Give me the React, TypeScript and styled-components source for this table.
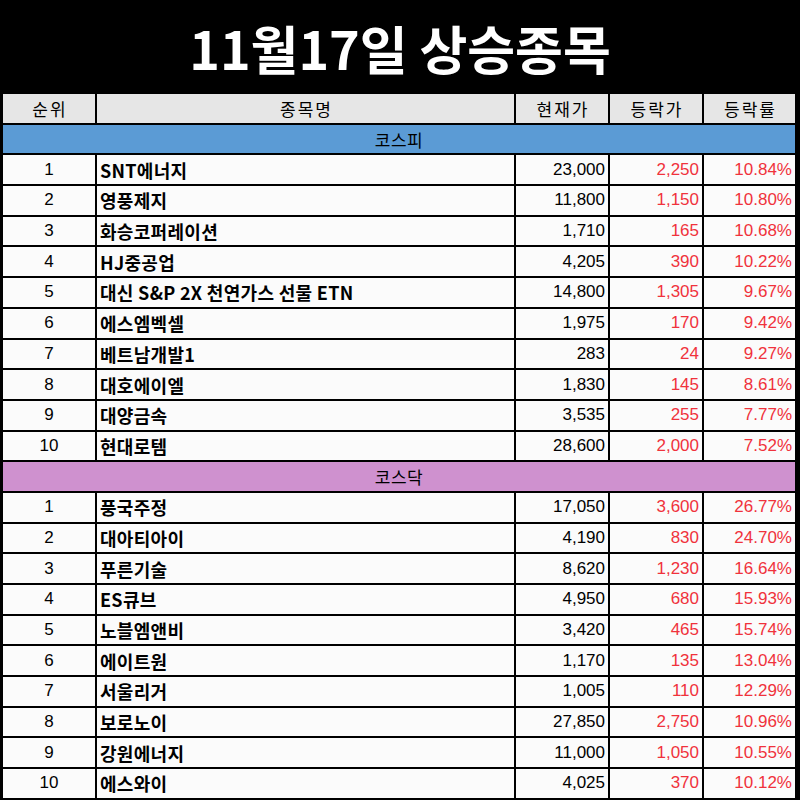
import React from 'react';
import styled, { createGlobalStyle } from 'styled-components';

const GlobalStyle = createGlobalStyle`
  html, body {
    margin: 0;
    padding: 0;
    background: #000;
  }
`;

const Page = styled.div`
  width: 800px;
  height: 800px;
  background: #000;
  overflow: hidden;
`;

const Title = styled.h1`
  margin: 0;
  height: 94px;
  display: flex;
  align-items: center;
  justify-content: center;
  color: #fff;
  font-family: "Noto Sans CJK KR", sans-serif;
  font-weight: 700;
  font-size: 52px;
`;

const Table = styled.div`
  display: grid;
  grid-template-columns: 92px 417px 92px 92px 91px;
  grid-auto-rows: 28.7px;
  gap: 2px;
  padding: 0 5px 3px 3px;
`;

const Cell = styled.div<{ $align?: 'left' | 'center' | 'right'; $red?: boolean }>`
  display: flex;
  align-items: center;
  justify-content: ${p => (p.$align === 'left' ? 'flex-start' : p.$align === 'right' ? 'flex-end' : 'center')};
  padding: 0 3px;
  background: #fbfbfb;
  color: ${p => (p.$red ? '#f0323c' : '#000')};
  font-family: "Liberation Sans", "Noto Sans CJK KR", sans-serif;
  font-size: 17px;
  white-space: nowrap;
  overflow: hidden;
`;

const HeadCell = styled(Cell)`
  background: #e6e6e6;
  font-family: "Noto Sans CJK KR", sans-serif;
  font-size: 17px;
  letter-spacing: 2px;
  padding-left: 5px;
`;

const NameCell = styled(Cell)`
  font-family: "Noto Sans CJK KR", sans-serif;
  font-weight: 700;
  font-size: 18px;
  letter-spacing: 0.3px;
`;

const Section = styled.div<{ $color: string }>`
  grid-column: 1 / -1;
  display: flex;
  align-items: center;
  justify-content: center;
  background: ${p => p.$color};
  font-family: "Noto Sans CJK KR", sans-serif;
  font-size: 17px;
  letter-spacing: 0.5px;
  color: #000;
`;

type Row = [string, string, string, string];

const kospi: Row[] = [
  ['SNT에너지', '23,000', '2,250', '10.84%'],
  ['영풍제지', '11,800', '1,150', '10.80%'],
  ['화승코퍼레이션', '1,710', '165', '10.68%'],
  ['HJ중공업', '4,205', '390', '10.22%'],
  ['대신 S&P 2X 천연가스 선물 ETN', '14,800', '1,305', '9.67%'],
  ['에스엠벡셀', '1,975', '170', '9.42%'],
  ['베트남개발1', '283', '24', '9.27%'],
  ['대호에이엘', '1,830', '145', '8.61%'],
  ['대양금속', '3,535', '255', '7.77%'],
  ['현대로템', '28,600', '2,000', '7.52%'],
];

const kosdaq: Row[] = [
  ['풍국주정', '17,050', '3,600', '26.77%'],
  ['대아티아이', '4,190', '830', '24.70%'],
  ['푸른기술', '8,620', '1,230', '16.64%'],
  ['ES큐브', '4,950', '680', '15.93%'],
  ['노블엠앤비', '3,420', '465', '15.74%'],
  ['에이트원', '1,170', '135', '13.04%'],
  ['서울리거', '1,005', '110', '12.29%'],
  ['보로노이', '27,850', '2,750', '10.96%'],
  ['강원에너지', '11,000', '1,050', '10.55%'],
  ['에스와이', '4,025', '370', '10.12%'],
];

const Rows = ({ rows }: { rows: Row[] }) => (
  <>
    {rows.map(([name, price, diff, rate], i) => (
      <React.Fragment key={name}>
        <Cell>{i + 1}</Cell>
        <NameCell $align="left">{name}</NameCell>
        <Cell $align="right">{price}</Cell>
        <Cell $align="right" $red>{diff}</Cell>
        <Cell $align="right" $red>{rate}</Cell>
      </React.Fragment>
    ))}
  </>
);

export default function App() {
  return (
    <Page>
      <GlobalStyle />
      <Title>11월17일 상승종목</Title>
      <Table>
        <HeadCell>순위</HeadCell>
        <HeadCell>종목명</HeadCell>
        <HeadCell>현재가</HeadCell>
        <HeadCell>등락가</HeadCell>
        <HeadCell>등락률</HeadCell>
        <Section $color="#5b9bd5">코스피</Section>
        <Rows rows={kospi} />
        <Section $color="#cf91cf">코스닥</Section>
        <Rows rows={kosdaq} />
      </Table>
    </Page>
  );
}
